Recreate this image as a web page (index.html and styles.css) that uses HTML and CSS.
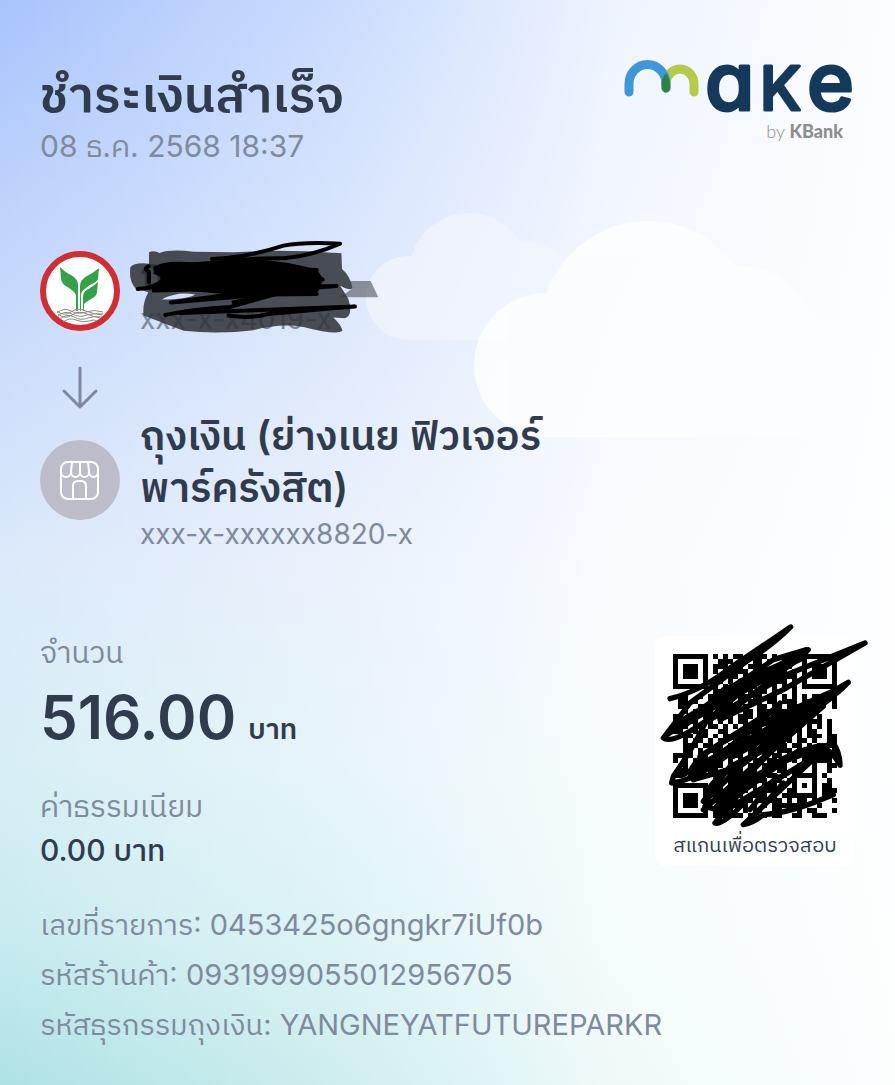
FILE: index.html
```html
<!DOCTYPE html>
<html lang="th">
<head>
  <meta charset="utf-8">
  <meta name="viewport" content="width=device-width, initial-scale=1">
  <title>ชำระเงินสำเร็จ</title>
  <link rel="stylesheet" href="styles.css">
</head>
<body>
  <main class="slip">
    <svg class="clouds" viewBox="0 0 500 230" aria-hidden="true">
      <g class="cloud-small">
        <circle cx="43" cy="85" r="42"/>
        <circle cx="104" cy="60" r="60"/>
        <circle cx="162" cy="78" r="49"/>
        <rect x="43" y="80" width="180" height="47"/>
      </g>
      <g class="cloud-big">
        <circle cx="181" cy="152" r="72"/>
        <circle cx="283" cy="116" r="108"/>
        <circle cx="374" cy="131" r="78"/>
        <circle cx="430" cy="162" r="62"/>
        <rect x="181" y="140" width="249" height="84"/>
      </g>
    </svg>

    <header class="top">
      <div>
        <h1 class="title">ชำระเงินสำเร็จ</h1>
        <p class="muted">08 ธ.ค. 2568 18:37</p>
      </div>
      <div class="brand">
        <svg class="brand-logo" viewBox="0 0 232 54" role="img" aria-label="make">
          <path d="M43 28V24A14 15 0 0 1 71 24V32" stroke="#b5c94a"/>
          <path d="M6 32V24A18 19 0 0 1 43 24V28" stroke="#3f97d8"/>
          <path d="M43 13Q48 20 47 29Q43 36 39 29Q37 19 43 13Z" fill="#2a8440" stroke="none"/>
          <text class="brand-a" x="82" y="50">a</text>
          <text class="brand-k" x="137" y="50">K</text>
          <text class="brand-a" x="184" y="50">e</text>
        </svg>
        <p class="brand-by">by <b>KBank</b></p>
      </div>
    </header>

    <section class="transfer">
      <svg class="avatar" viewBox="0 0 80 80" aria-hidden="true">
        <circle cx="40" cy="40" r="37" fill="#fff" stroke="#cf2e33" stroke-width="6"/>
        <path d="M20 16Q26 22 31 24Q38 28 38 34V60H36V44Q35 41 29 37Q21 33 21 27Z" fill="#35a04a"/>
        <path d="M59 17Q53 22 47 25Q40 29 40 35V60H41V43Q42 39 50 34Q57 31 58 28Z" fill="#35a04a"/>
        <path d="M58 31Q55 34 50 37Q43 40 43 46V60H44V53Q46 51 51 48Q57 45 57 41Z" fill="#35a04a"/>
        <g fill="none" stroke="#8d8780" stroke-width="1">
          <path d="M17 62Q24 56 31 60T46 61T63 61"/>
          <path d="M17 60Q24 66 31 61T46 60T63 63"/>
          <path d="M18 65Q25 59 32 63T47 64T62 64"/>
          <path d="M18 63Q25 69 32 64T47 63T62 66"/>
          <path d="M20 68Q27 62 34 66T48 67T60 67"/>
          <path d="M23 71Q30 66 36 69T49 70T56 70"/>
        </g>
      </svg>
      <div class="party hidden-party">
        <p class="name">กา</p>
        <p class="muted account">xxx-x-x4019-x</p>
        <svg class="marker" viewBox="320 40 760 290" aria-hidden="true">
          <g fill="#303237" fill-opacity=".86">
            <path fill-rule="evenodd" d="M386 80Q400 72 418 82Q450 70 520 78L640 80Q780 70 964 83L966 130Q990 150 998 188Q985 196 960 180L985 220Q1000 270 975 278L940 276Q965 300 967 316Q950 330 850 304Q780 292 700 314Q600 326 490 316L370 270Q365 235 384 200L345 188Q325 165 330 125Q340 110 386 114ZM460 208Q435 213 425 222Q500 222 525 207Q490 200 460 208Z"/>
            <path d="M990 166H1052L1075 215H960L998 188Z" fill-opacity=".5"/>
          </g>
          <path d="M400 122Q540 105 690 100Q800 105 890 132L910 160L890 208Q770 215 620 206L440 190L380 180Q450 160 400 145Z"/>
          <g class="ink">
            <path d="M575 100Q680 96 790 60Q850 48 960 54Q880 90 790 98Q660 95 560 120Q430 105 405 130Q450 137 610 125L890 133"/>
            <path d="M352 190Q450 184 550 148T870 135L480 165L908 162L400 195L950 181L640 205L452 231L730 207L890 205"/>
            <path d="M385 122Q368 130 386 138V170M435 268Q520 250 630 244L770 205L640 230M480 262L1005 243Q800 260 740 266Q690 280 625 270"/>
          </g>
        </svg>
      </div>

      <svg class="arrow" viewBox="0 0 80 44" aria-hidden="true">
        <path d="M40 2V41M24 25L40 41L56 25"/>
      </svg>

      <svg class="avatar shop" viewBox="0 0 80 80" aria-hidden="true">
        <circle cx="40" cy="40" r="40" fill="#bcbccb"/>
        <g fill="none" stroke="#fff" stroke-width="2" stroke-linecap="round" stroke-linejoin="round">
          <rect x="21" y="22" width="37" height="37" rx="7"/>
          <path d="M33 59V46Q33 41 38 41H41Q46 41 46 46V59"/>
          <path d="M21 32A5 5 0 0 0 31 32A4.500 5 0 0 0 40 32A4.500 5 0 0 0 49 32A4.500 5 0 0 0 58 32M32 22L31 32M40 22V32M48 22L49 32"/>
        </g>
      </svg>
      <div class="party">
        <h2 class="name">ถุงเงิน (ย่างเนย ฟิวเจอร์<br>พาร์ครังสิต)</h2>
        <p class="muted account">xxx-x-xxxxxx8820-x</p>
      </div>
    </section>

    <section class="summary">
      <dl class="amounts">
        <dt>จำนวน</dt>
        <dd class="total">516.00 <span class="unit">บาท</span></dd>
        <dt>ค่าธรรมเนียม</dt>
        <dd class="fee">0.00 บาท</dd>
      </dl>
      <figure class="qr-card">
        <svg class="qr" id="qr" viewBox="0 0 33 33" shape-rendering="crispEdges" role="img" aria-label="QR"></svg>
        <figcaption>สแกนเพื่อตรวจสอบ</figcaption>
        <svg class="scribble" viewBox="45 40 645 620" aria-hidden="true">
          <path d="M90 267Q180 245 270 175L452 52Q400 105 320 155L150 280L70 385Q100 405 210 325Q350 200 505 120Q480 150 400 190L80 375Q90 350 180 300L400 150L500 120L330 215L130 350L300 215L490 135L240 330L430 240L675 100L440 195L210 330"/>
          <path d="M210 310Q170 400 100 500L95 520Q180 510 300 405L625 218Q560 285 440 345L150 490Q160 440 300 370L610 230L330 390L130 495L260 420L580 260L300 470L160 510L400 300L180 440"/>
          <path d="M420 280L385 350L440 340L300 470L200 570Q190 545 240 500L480 350L550 290L400 420L230 590Q290 520 420 460L580 400Q600 430 600 467Q570 410 530 410Q450 430 400 465L230 600L195 590L340 500L225 640Q250 650 330 560L540 430L310 645Q340 640 370 615Q450 610 555 565L580 555"/>
          <path d="M190 575L270 470L420 400L190 600M260 580L480 420M235 615L440 490M200 300L250 240L420 170M230 290L460 160M300 235L500 140M190 470L350 350L500 300M250 430L470 310M280 440L440 350M410 500L330 600M430 520L350 610"/>
        </svg>
      </figure>
    </section>

    <footer class="refs">
      <p>เลขที่รายการ: 0453425o6gngkr7iUf0b</p>
      <p>รหัสร้านค้า: 0931999055012956705</p>
      <p>รหัสธุรกรรมถุงเงิน: YANGNEYATFUTUREPARKR</p>
    </footer>
  </main>
  <script src="qr.js"></script>
</body>
</html>
```
FILE: styles.css
```css
* {
  box-sizing: border-box;
}

body {
  margin: 0;
  min-height: 100vh;
  font-family: Inter, "IBM Plex Sans Thai", "Noto Sans Thai", sans-serif;
  color: #303c4e;
  background:
    linear-gradient(to right, rgba(255, 255, 255, 0) 0%, rgba(255, 255, 255, .4) 38%, rgba(255, 255, 255, .8) 68%, rgba(255, 255, 255, .97) 100%),
    linear-gradient(to bottom, #a8c4fc 0%, #bdd2fc 18%, #cfdffb 36%, #dce9fa 52%, #d8eef6 70%, #c8ebf0 86%, #aee2e4 100%);
}

h1, h2, p, dl, dd, figure {
  margin: 0;
}

.slip {
  position: relative;
  padding: 60px 40px 36px;
}

/* clouds behind the content */
.clouds {
  position: absolute;
  top: 213px;
  left: 365px;
  width: 500px;
  z-index: -1;
}

.cloud-small {
  fill: #f4f7fe;
  opacity: .65;
}

.cloud-big {
  fill: #fdfeff;
  opacity: .85;
}

.top {
  display: flex;
  justify-content: space-between;
  align-items: flex-start;
}

.title {
  font-size: 50px;
  line-height: 68px;
  font-weight: 600;
}

.muted {
  font-size: 30px;
  line-height: 36px;
  color: #7f8b9d;
}

.brand-logo {
  display: block;
  width: 232px;
  overflow: visible;
  fill: none;
  stroke-width: 9px;
  stroke-linecap: round;
}

.brand-logo text {
  font-family: Inter, sans-serif;
  font-feature-settings: "cv11";
  font-weight: 500;
  fill: #15395b;
  stroke: #15395b;
  stroke-width: 3px;
  stroke-linejoin: round;
}

.brand-a {
  font-size: 80px;
}

.brand-k {
  font-size: 60px;
}

.brand-by {
  padding-right: 12px;
  font-family: Lato, sans-serif;
  font-size: 18px;
  line-height: 34px;
  font-weight: 300;
  text-align: right;
  color: #8b8d90;
}

.brand-by b {
  font-weight: 900;
}

.transfer {
  display: grid;
  grid-template-columns: 80px 1fr;
  column-gap: 20px;
  margin-top: 87px;
}

.avatar {
  width: 80px;
  height: 80px;
}

.shop {
  margin-top: 30px;
}

.arrow {
  grid-column: 1 / 3;
  width: 80px;
  margin-top: 35px;
  fill: none;
  stroke: #7f88a0;
  stroke-width: 3px;
  stroke-linecap: round;
  stroke-linejoin: round;
}

.name {
  font-size: 40px;
  line-height: 52px;
  font-weight: 600;
}

.account {
  font-size: 28px;
  line-height: 40px;
}

.hidden-party {
  position: relative;
  height: 80px;
  margin-top: -4px;
}

.marker {
  position: absolute;
  top: -8px;
  left: -13px;
  width: 253px;
}

.ink {
  fill: none;
  stroke: #000;
  stroke-width: 12px;
  stroke-linecap: round;
  stroke-linejoin: round;
}

.summary {
  display: flex;
  justify-content: space-between;
  align-items: flex-start;
  margin-top: 78px;
}

.amounts dt {
  font-size: 30px;
  line-height: 40px;
  color: #7f8b9d;
}

.total {
  display: flex;
  align-items: baseline;
  gap: 12px;
  margin-bottom: 12px;
  font-size: 60px;
  line-height: 90px;
  font-weight: 600;
}

.unit {
  font-size: 28px;
}

.fee {
  font-size: 30px;
  line-height: 48px;
  font-weight: 500;
}

.qr-card {
  position: relative;
  width: 200px;
  margin-top: 4px;
  padding: 18px 18px 0;
  border-radius: 10px;
  background: #fff;
}

.qr {
  display: block;
  width: 100%;
}

.qr-card figcaption {
  padding: 7px 0 1px;
  font-size: 20px;
  line-height: 40px;
  text-align: center;
  white-space: nowrap;
}

.scribble {
  position: absolute;
  top: -13px;
  left: 0;
  width: 215px;
  fill: none;
  stroke: #000;
  stroke-width: 16px;
  stroke-linecap: round;
  stroke-linejoin: round;
}

.refs {
  margin-top: 26px;
  font-size: 29px;
  line-height: 50px;
  color: #7f8b9d;
}
```
FILE: qr.js
```js
// # = dark module
var rows = [
  "#######.#.#.##.####.#..#..#######",
  "#.....#..###.##.##.#..##..#.....#",
  "#.###.#.###.##.####..###..#.###.#",
  "#.###.#.#.#.###.##.#.##.#.#.###.#",
  "#.###.#..#.##.#.#.###.###.#.###.#",
  "#.....#.##.#.#.##.#.###.#.#.....#",
  "#######.#.#.#.#.#.#.#.#.#.#######",
  "........##.##..#.##.##..#........",
  ".##..#.###.#.##.##.##.#.#.#.#####",
  ".##.#..##.##.#.###.##.###.#####.#",
  ".##..##.##.##.#..##.##.######...#",
  "..#.##.#.##.#.##.###.##.####.....",
  "#...#.##..##.###.##.##.##.##.#...",
  "##.##..#.#.#.##.##.####.#..###.#.",
  "###.##.##.#.#.#.##.###.#.#.#.#.#.",
  "##..#.#..##..#.#######.#.#.##..#.",
  "..##.##.#.##.##.####.#.#.#.###.##",
  "..#.##.#.##.#.##.##.##.#.##.#..##",
  "..###.##.#.#.##.#.##.##.##.#.####",
  "..##.#.###.#.#.##.##.###.#.####.#",
  "####.##.##.###.##.#.##.##.#######",
  "#.#.###..#.#.##.##.##.#.#.#.####.",
  "..#.###.##.#.#.##.##.##..##.#..##",
  ".##.##.##.#.##.##.##.##.##..#..#.",
  "##.####.##.####.##.##.#.#####.#..",
  "........##.###.####.##.##...#..#.",
  "#######..#.######.###.#.#.#.#.##.",
  "#.....#.##.##.#.##.###.##...#.###",
  "#.###.#.###.##.####.#.#######.##.",
  "#.###.#.#####.##.#####.#.##.#...#",
  "#.###.#..######.#.#.#######..#...",
  "#.....#.####..#.##..##...#.##...#",
  "#######.######.##.#.##..##..###.."
];

var d = "";
rows.forEach(function (row, y) {
  for (var x = 0; x < row.length; x++) {
    if (row[x] === "#") d += "M" + x + " " + y + "h1v1h-1z";
  }
});
document.getElementById("qr").innerHTML = '<path d="' + d + '"/>';
```
